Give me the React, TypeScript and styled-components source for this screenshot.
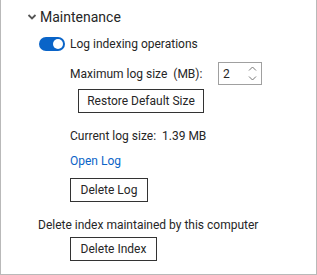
import React from "react";
import styled, { createGlobalStyle } from "styled-components";

const Global = createGlobalStyle`
  html, body { margin: 0; padding: 0; background: #fff; }
  body { font-family: Roboto, "Noto Sans", sans-serif; color: #262626; }
`;

const Panel = styled.div`
  box-sizing: border-box;
  width: 317px;
  height: 275px;
  border: 1px solid #b9b9b9;
  border-top: none;
  padding: 7px 0 0 0;
  display: flex;
  flex-direction: column;
  font-size: 12px;
`;

const Header = styled.div`
  display: flex;
  align-items: center;
  height: 20px;
  padding-left: 26px;
  gap: 3px;
  font-size: 14px;
`;

const Row = styled.div<{ $indent: number; $mt: number; $h?: number }>`
  display: flex;
  align-items: center;
  margin-top: ${(p) => p.$mt}px;
  padding-left: ${(p) => p.$indent - 1}px;
  height: ${(p) => p.$h ?? 20}px;
  line-height: 20px;
`;

const Toggle = styled.div`
  box-sizing: border-box;
  width: 26px;
  height: 14px;
  border-radius: 7px;
  background: #0a64c8;
  position: relative;
  margin-right: 5px;
  &::after {
    content: "";
    position: absolute;
    right: 2px;
    top: 2px;
    width: 10px;
    height: 10px;
    border-radius: 50%;
    background: #fff;
  }
`;

const Label = styled.span`
  white-space: pre;
`;

const Spin = styled.div`
  box-sizing: border-box;
  margin-left: auto;
  margin-right: 54px;
  width: 44px;
  height: 23px;
  border: 1px solid #a0a0a0;
  display: flex;
  align-items: center;
  justify-content: space-between;
  padding: 0 4px 0 4px;
`;

const Arrows = styled.div`
  display: flex;
  flex-direction: column;
  gap: 5px;
`;

const Button = styled.button<{ $w: number }>`
  box-sizing: border-box;
  width: ${(p) => p.$w}px;
  height: 24px;
  padding: 0;
  border: 1px solid #333;
  background: #fff;
  font-family: inherit;
  font-size: 12px;
  color: #262626;
  margin: 0;
`;

const Link = styled.span`
  color: #0a64c8;
`;

const Chevron = () => (
  <svg width="10" height="8" viewBox="0 0 10 8">
    <path d="M1.5 2 L5 5.5 L8.5 2" fill="none" stroke="#555" strokeWidth="1.8" />
  </svg>
);

const Up = () => (
  <svg width="9" height="5" viewBox="0 0 9 5">
    <path d="M1 4.5 L4.5 1 L8 4.5" fill="none" stroke="#777" strokeWidth="1" />
  </svg>
);
const Down = () => (
  <svg width="9" height="5" viewBox="0 0 9 5">
    <path d="M1 0.5 L4.5 4 L8 0.5" fill="none" stroke="#777" strokeWidth="1" />
  </svg>
);

export default function App() {
  return (
    <>
      <Global />
      <Panel>
        <Header>
          <Chevron />
          <span>Maintenance</span>
        </Header>
        <Row $indent={39} $mt={7}>
          <Toggle />
          <Label>Log indexing operations</Label>
        </Row>
        <Row $indent={70} $mt={8} $h={23}>
          <Label>Maximum log size  (MB):</Label>
          <Spin>
            <span>2</span>
            <Arrows>
              <Up />
              <Down />
            </Arrows>
          </Spin>
        </Row>
        <Row $indent={78} $mt={4} $h={24}>
          <Button $w={126}>Restore Default Size</Button>
        </Row>
        <Row $indent={70} $mt={13}>
          <Label>Current log size:  1.39 MB</Label>
        </Row>
        <Row $indent={70} $mt={5}>
          <Link>Open Log</Link>
        </Row>
        <Row $indent={70} $mt={7} $h={24}>
          <Button $w={78}>Delete Log</Button>
        </Row>
        <Row $indent={38} $mt={13}>
          <Label>Delete index maintained by this computer</Label>
        </Row>
        <Row $indent={70} $mt={2} $h={24}>
          <Button $w={87}>Delete Index</Button>
        </Row>
      </Panel>
    </>
  );
}
